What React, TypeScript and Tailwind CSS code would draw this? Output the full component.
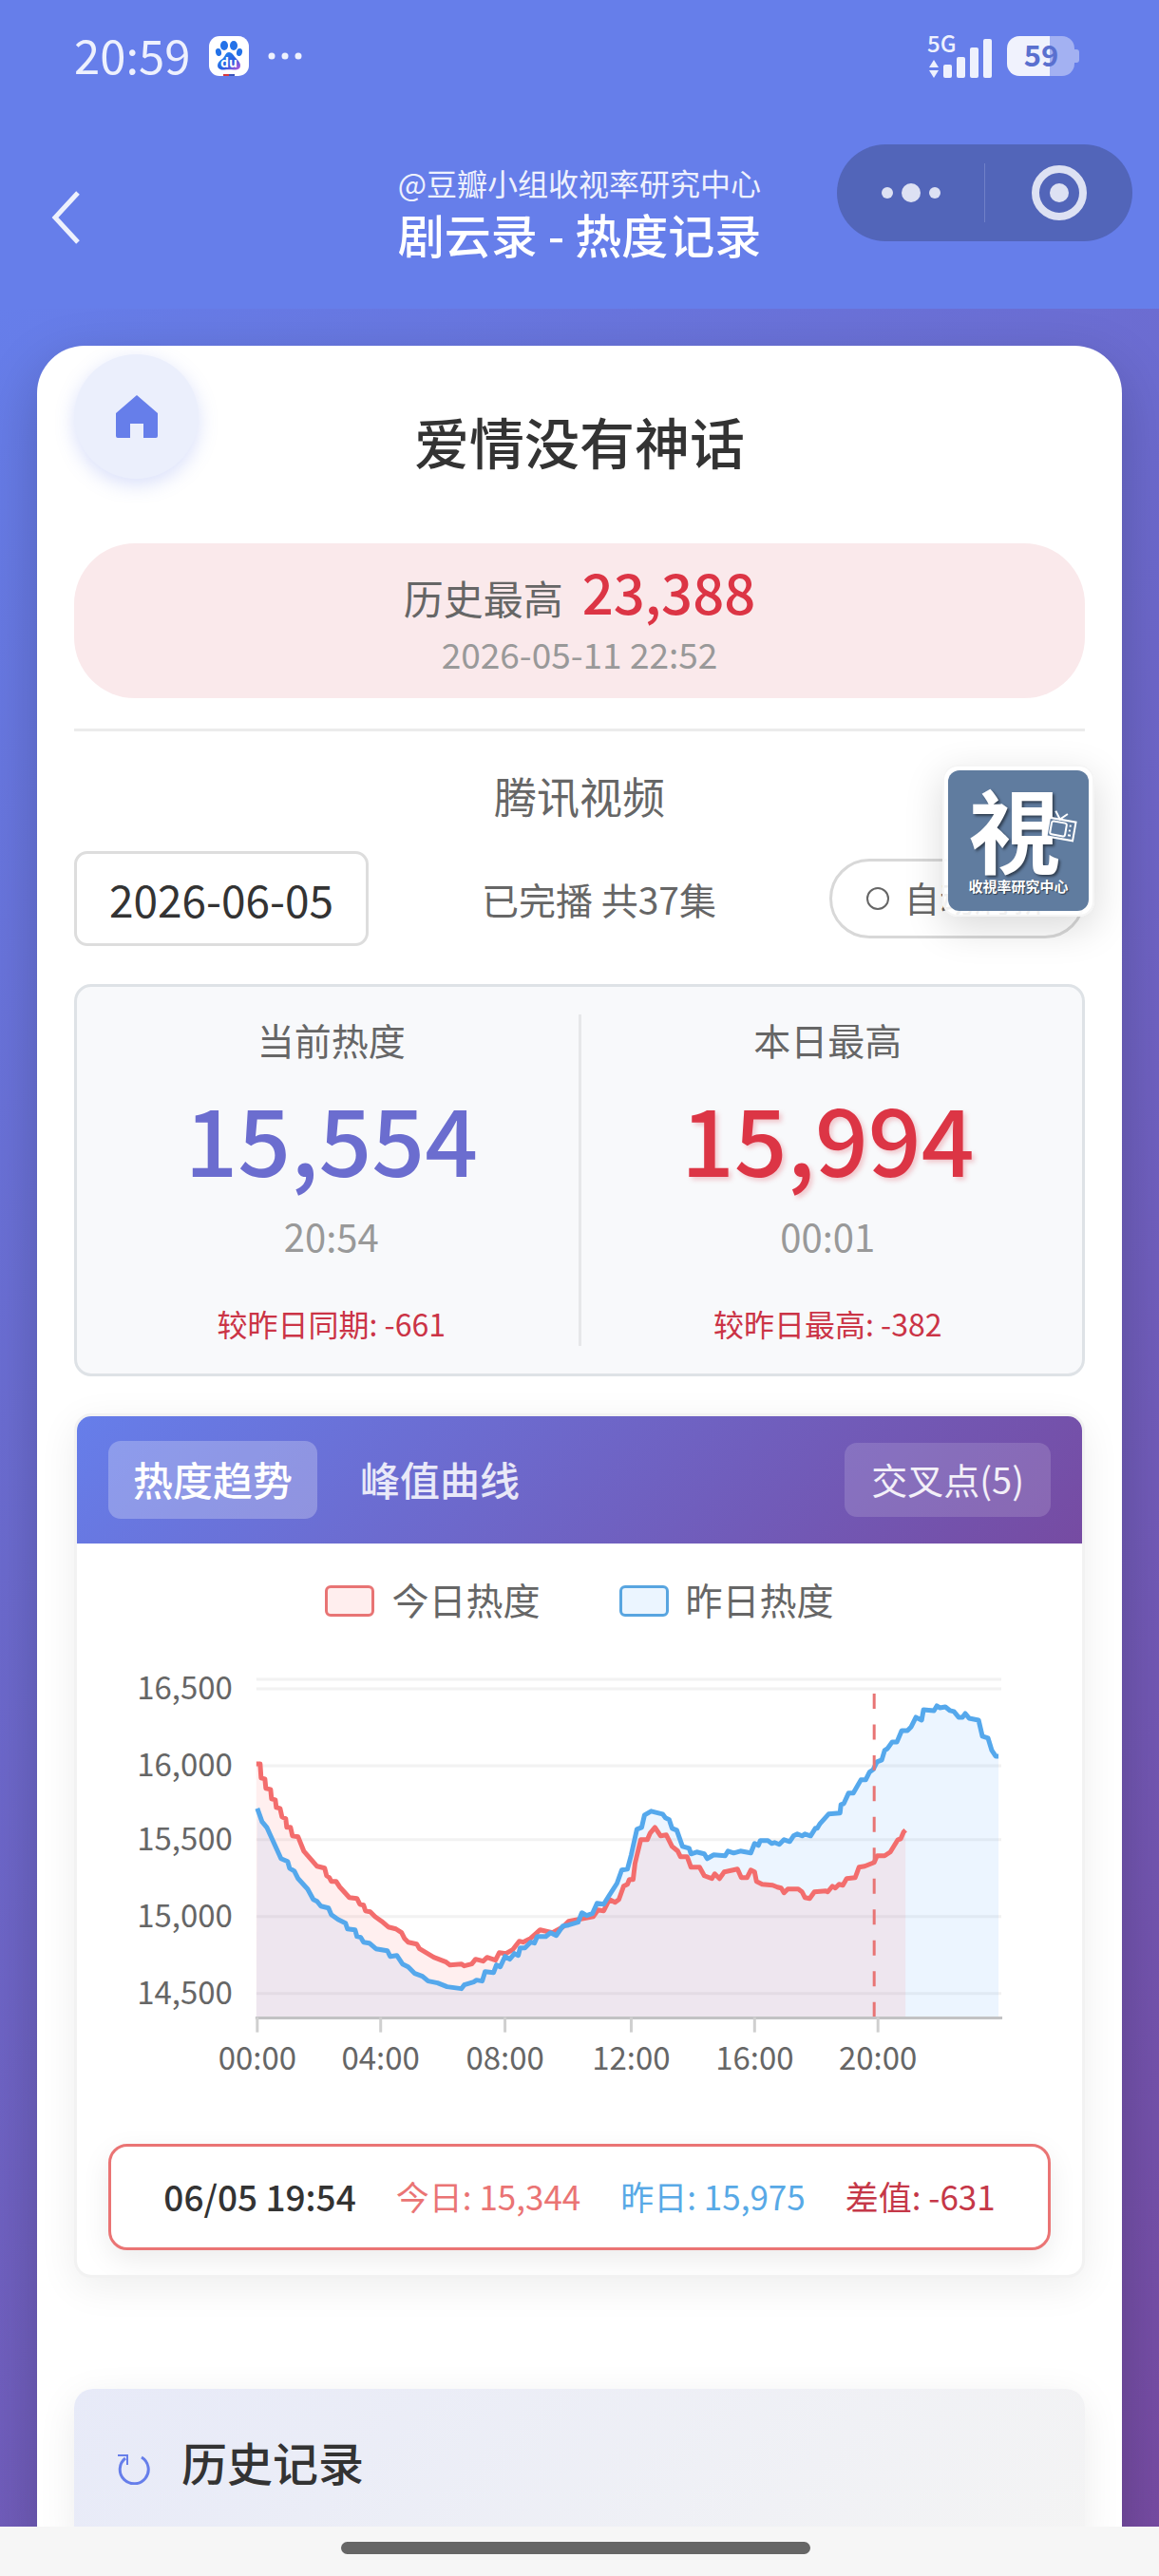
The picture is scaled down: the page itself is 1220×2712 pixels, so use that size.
import { useState } from "react";

// Plot coordinates inside the 993 x 480 chart viewBox
const TODAY_POINTS =
    "156,117 160,117 161,132 165,133 166,143 171,144 172,154 176,155 177,163 181,164 183,173 187,175 188,184 192,184 194,193 200,194 206,209 213,217 220,225 228,227 230,235 233,237 235,241 240,241 244,247 254,258 262,259 265,265 269,266 271,272 276,273 281,278 288,283 295,289 303,291 309,295 312,301 316,305 325,307 328,312 343,321 356,326 360,329 372,328 375,330 383,328 387,323 395,325 399,321 408,324 412,316 419,317 426,313 433,304 437,305 445,301 455,292 468,295 479,289 485,283 511,278 516,271 522,272 528,260 534,263 538,260 543,246 547,244 549,239 553,239 555,222 561,197 568,197 571,190 576,184 582,193 588,192 594,204 600,209 603,215 610,215 614,226 623,226 628,235 636,238 639,233 644,238 649,231 663,228 667,237 673,237 677,229 681,231 683,241 689,244 700,245 705,247 709,248 712,253 716,249 727,249 731,252 734,258 739,259 744,252 756,251 758,252 763,246 766,248 770,244 774,245 778,238 787,237 791,226 797,225 807,221 810,214 818,214 824,210 832,197 835,196 838,189 840,187";

const YESTERDAY_POINTS =
    "157,164 162,178 167,184 172,195 182,217 189,220 191,227 196,230 200,238 210,249 216,260 220,262 224,267 232,269 235,276 242,281 250,285 252,291 260,292 262,299 266,300 269,305 275,306 282,312 294,314 297,320 304,319 310,328 316,331 323,338 331,341 337,346 347,348 357,352 372,354 375,350 385,347 388,345 394,346 397,336 406,337 409,329 413,331 418,320 423,323 428,317 432,319 434,311 439,311 445,305 449,306 452,299 461,299 466,295 472,298 479,288 485,287 495,284 499,274 504,277 510,275 515,264 522,265 527,257 536,243 541,229 547,228 551,213 557,186 562,184 565,171 572,167 584,170 587,174 591,176 594,185 599,187 605,204 612,206 614,212 620,210 628,212 631,217 638,213 650,214 653,209 659,211 666,209 677,211 681,201 685,203 687,198 695,198 699,201 702,200 707,202 712,197 718,199 722,193 726,191 731,193 734,191 740,193 745,185 747,185 750,180 759,170 771,169 772,160 775,159 780,148 785,148 793,134 798,134 802,126 806,123 810,115 815,113 818,103 821,101 826,94 831,94 836,82 842,82 846,78 851,68 857,71 859,60 870,61 873,56 876,58 882,57 887,61 891,62 896,68 900,68 903,64 907,69 917,71 921,88 927,90 931,103 935,109 938,109";

const Y_AXIS = [
    { label: "16,500", y: 38 },
    { label: "16,000", y: 119 },
    { label: "15,500", y: 197 },
    { label: "15,000", y: 278 },
    { label: "14,500", y: 359 },
];

const X_AXIS = [
    { label: "00:00", x: 157 },
    { label: "04:00", x: 287 },
    { label: "08:00", x: 418 },
    { label: "12:00", x: 551 },
    { label: "16:00", x: 681 },
    { label: "20:00", x: 811 },
];

function BaiduIcon() {
    return (
        <svg viewBox="0 0 42 42" className="h-[42px] w-[42px]" aria-hidden="true">
            <defs>
                <linearGradient id="paw" x1="0" y1="0" x2="1" y2="1">
                    <stop offset="0" stopColor="#2196f3" />
                    <stop offset="0.6" stopColor="#2b5be0" />
                    <stop offset="1" stopColor="#c45bd8" />
                </linearGradient>
            </defs>
            <rect width="42" height="42" rx="11" fill="#fff" />
            <g fill="#2372e8">
                <ellipse cx="10" cy="17" rx="3" ry="4" transform="rotate(-12 10 17)" />
                <ellipse cx="16" cy="10" rx="4" ry="5" />
                <ellipse cx="26" cy="10" rx="4" ry="5" />
                <ellipse cx="32" cy="17" rx="3" ry="4" transform="rotate(12 32 17)" />
            </g>
            <path d="M21 17c4 0 5 4 8 7s4 5 4 7c0 4-4 5-7 4.500-3-.5-7-.5-10 0C12 36 9 34 9 31c0-3 2-5 5-7s3-7 7-7z" fill="url(#paw)" />
            <text x="21" y="33" textAnchor="middle" fontSize="14" fontWeight="700" fill="#fff">
                du
            </text>
            <path d="M15 40h6v2h-6z" fill="#d8383f" />
            <path d="M21 40h6v2h-6z" fill="#3b53b8" />
        </svg>
    );
}

function StatusBar() {
    return (
        <div className="flex h-[118px] items-center justify-between pr-[84px] pl-[78px] text-[#eef1fd]">
            <div className="flex items-center gap-5">
                <span className="pb-1 text-[49px] leading-[60px]">20:59</span>
                <BaiduIcon />
                <svg viewBox="0 0 36 8" className="h-2 w-9" fill="currentColor" aria-hidden="true">
                    <circle cx="4" cy="4" r="3.500" />
                    <circle cx="18" cy="4" r="3.500" />
                    <circle cx="32" cy="4" r="3.500" />
                </svg>
            </div>
            <div className="flex items-center gap-4">
                <svg viewBox="0 0 68 46" className="h-[46px] w-[68px] overflow-visible" fill="currentColor" aria-hidden="true">
                    <text x="0" y="19" fontSize="24" fontWeight="500">
                        5G
                    </text>
                    <path d="M7 27l5 8H2zM7 46l5-8H2z" />
                    <rect x="17" y="32" width="9" height="14" rx="2" />
                    <rect x="31" y="24" width="9" height="22" rx="2" />
                    <rect x="45" y="14" width="9" height="32" rx="2" />
                    <rect x="59" y="5" width="9" height="41" rx="2" />
                </svg>
                <svg viewBox="0 0 76 42" className="h-[42px] w-[76px] overflow-visible" aria-label="电量 59%">
                    <path d="M45 0h13a13 13 0 0 1 13 13v16a13 13 0 0 1-13 13H45z" fill="#a3b1f2" />
                    <path d="M71 14h2a3 3 0 0 1 3 3v8a3 3 0 0 1-3 3h-2z" fill="#a3b1f2" />
                    <path d="M13 0h32v42H13A13 13 0 0 1 0 29V13A13 13 0 0 1 13 0z" fill="#f0f2fd" />
                    <text x="36" y="32" textAnchor="middle" fontSize="31" fontWeight="700" fill="#5a70cf">
                        59
                    </text>
                </svg>
            </div>
        </div>
    );
}

function NavBar() {
    return (
        <div className="grid h-[207px] grid-cols-[1fr_auto_1fr] items-center px-7 pt-[14px] text-white">
            <button type="button" aria-label="返回" className="pl-[26px] text-[#eef1fd]">
                <svg viewBox="0 0 30 56" className="h-14 w-[30px]" fill="none" stroke="currentColor" strokeWidth="5">
                    <path d="M28 2L4 28l24 26" />
                </svg>
            </button>
            <div className="pb-[9px] text-center">
                <p className="text-[32px] leading-[44px] text-[#eef1fd]">@豆瓣小组收视率研究中心</p>
                <h1 className="text-[49px] leading-[64px] font-medium">剧云录 - 热度记录</h1>
            </div>
            <div className="mt-5 flex h-[102px] w-[311px] items-center self-start justify-self-end rounded-full bg-[#5265b9] text-[#dde1f3]">
                <button type="button" aria-label="更多" className="flex flex-1 justify-center">
                    <svg viewBox="0 0 62 20" className="h-5 w-[62px]" fill="currentColor">
                        <circle cx="6" cy="10" r="6" />
                        <circle cx="31" cy="10" r="10" />
                        <circle cx="56" cy="10" r="6" />
                    </svg>
                </button>
                <span className="h-[62px] w-px bg-[#7080c8]" />
                <button type="button" aria-label="关闭" className="flex flex-1 justify-center">
                    <svg viewBox="0 0 58 58" className="h-[58px] w-[58px]" fill="currentColor">
                        <circle cx="29" cy="29" r="25" fill="none" stroke="currentColor" strokeWidth="8" />
                        <circle cx="29" cy="29" r="10" />
                    </svg>
                </button>
            </div>
        </div>
    );
}

function LogoWidget() {
    return (
        <div className="absolute -top-[91px] -right-[10px] rounded-[16px] border-2 border-[#f5f5f5] bg-white/90 p-1 shadow-[0_12px_40px_rgba(0,0,0,0.15)]">
            <div className="relative flex h-[148px] w-[148px] flex-col items-center rounded-[12px] bg-[#607c9f] pt-[10px] text-white">
                <span className="pr-2 text-[96px] leading-[100px] font-bold [text-shadow:2px_2px_3px_rgba(0,0,0,0.5)]">視</span>
                <span className="text-[15px] leading-[24px] font-bold [text-shadow:1px_1px_1px_rgba(0,0,0,0.5)]">收視率研究中心</span>
                <svg viewBox="0 0 34 36" className="absolute top-[42px] right-3 h-9 w-[34px]" fill="none" stroke="#fff" strokeWidth="2">
                    <g transform="rotate(10 17 20)">
                        <rect x="3" y="10" width="28" height="20" fill="#607c9f" />
                        <rect x="6" y="13" width="16" height="14" rx="2" />
                        <path d="M26 14v2M26 19v2M25 25h3" />
                        <path d="M8 2l6 8 7-7" />
                    </g>
                </svg>
            </div>
        </div>
    );
}

interface StatProps {
    label: string;
    value: string;
    time: string;
    diff: string;
    tone: string;
}

function Stat({ label, value, time, diff, tone }: StatProps) {
    return (
        <div className="flex-1 pb-[2px] text-center">
            <p className="text-[39px] leading-[52px] text-[#666]">{label}</p>
            <p className={`mt-[27px] text-[98px] leading-[98px] font-medium ${tone}`}>{value}</p>
            <p className="mt-7 text-[40px] leading-[56px] text-[#999]">{time}</p>
            <p className="mt-[42px] text-[32px] leading-[44px] text-[#cb3446]">{diff}</p>
        </div>
    );
}

function TrendChart() {
    return (
        <svg viewBox="0 0 993 480" className="mt-[27px] block w-full" role="img" aria-label="热度趋势图">
            <g stroke="#f2f2f2" strokeWidth="3">
                <path d="M156 28H941" />
                {Y_AXIS.map((tick) => (
                    <path key={tick.label} d={`M156 ${tick.y}H941`} />
                ))}
            </g>

            <polygon points={`${YESTERDAY_POINTS} 938,385 156,385`} fill="#54a0ff" fillOpacity="0.11" />
            <polygon points={`${TODAY_POINTS} 840,385 156,385`} fill="#ff6b6b" fillOpacity="0.11" />
            <g fill="none" strokeWidth="5" strokeLinejoin="round">
                <polyline points={TODAY_POINTS} stroke="#f36d6d" />
                <polyline points={YESTERDAY_POINTS} stroke="#55a8ec" />
            </g>

            {/* Selected time */}
            <path d="M807 43V385" stroke="#e87474" strokeWidth="3" strokeDasharray="16 16.500" />

            <path d="M155 385H942" stroke="#c2c2c4" strokeWidth="3" />
            <g fill="#666" fontSize="33">
                {Y_AXIS.map((tick) => (
                    <text key={tick.label} x="131" y={tick.y + 11} textAnchor="end">
                        {tick.label}
                    </text>
                ))}
                {X_AXIS.map((tick) => (
                    <g key={tick.label}>
                        <path d={`M${tick.x} 384V400`} stroke="#cfcfcf" strokeWidth="3" />
                        <text x={tick.x} y="439" textAnchor="middle">
                            {tick.label}
                        </text>
                    </g>
                ))}
            </g>
        </svg>
    );
}

const TABS = ["热度趋势", "峰值曲线"];

export default function App() {
    const [tab, setTab] = useState(TABS[0]);
    const [date, setDate] = useState("2026-06-05");

    return (
        <div className="flex h-screen flex-col font-['Noto_Sans_CJK_SC',sans-serif] text-[#333]">
            <header className="shrink-0 bg-[#667eea]">
                <StatusBar />
                <NavBar />
            </header>

            <main className="min-h-0 flex-1 overflow-y-auto bg-linear-[135deg] from-[#667eea] to-[#764ba2] px-[39px] pt-[39px] [scrollbar-width:none]">
                <div className="min-h-full rounded-t-[50px] bg-white px-[39px] shadow-[0_20px_60px_rgba(0,0,0,0.2)]">
                    <div className="grid h-52 grid-cols-[1fr_auto_1fr] items-center">
                        <button
                            type="button"
                            aria-label="首页"
                            className="mt-[9px] flex h-[131px] w-[131px] items-center justify-center self-start rounded-full bg-[#ebeffc] shadow-[0_6px_20px_rgba(102,126,234,0.25)]"
                        >
                            <svg viewBox="0 0 44 45" className="h-[45px] w-11" fill="#667eea">
                                <path d="M22 0l22 19v24a2 2 0 0 1-2 2H29V30H15v15H2a2 2 0 0 1-2-2V19z" />
                            </svg>
                        </button>
                        <h2 className="pb-2 text-[58px] leading-[80px] font-medium">爱情没有神话</h2>
                    </div>

                    <div className="rounded-[64px] bg-[#fae9eb] pt-[14px] pb-[17px] text-center">
                        <p className="flex items-baseline justify-center gap-5">
                            <span className="text-[42px] leading-none text-[#666]">历史最高</span>
                            <span className="text-[58px] leading-[72px] font-medium text-[#dc3545]">23,388</span>
                        </p>
                        <p className="text-[37px] leading-[60px] text-[#999]">2026-05-11 22:52</p>
                    </div>

                    <section className="mt-8 border-t-[3px] border-[#ebebeb] pt-[38px]">
                        <h3 className="text-center text-[45px] leading-[60px] text-[#666]">腾讯视频</h3>
                        <div className="relative mt-7 flex items-center justify-between">
                            <input
                                type="text"
                                aria-label="日期"
                                value={date}
                                onChange={(e) => setDate(e.target.value)}
                                className="h-[100px] w-[310px] rounded-[14px] border-[3px] border-[#ddd] bg-white text-center text-[46px]"
                            />
                            <span className="text-[39px] text-[#666]">已完播 共37集</span>
                            <button
                                type="button"
                                className="flex h-[84px] w-[269px] items-center gap-4 rounded-full border-[3px] border-[#d8d8d8] pl-9 text-[37px] whitespace-nowrap text-[#666]"
                            >
                                <span className="h-6 w-6 rounded-full border-2 border-[#666]" />
                                自动刷新
                            </button>
                            <LogoWidget />
                        </div>
                    </section>

                    <section className="mt-10 flex rounded-[18px] border-[3px] border-[#dee2e6] bg-[#f8f9fb] px-2 py-[29px]">
                        <Stat label="当前热度" value="15,554" time="20:54" diff="较昨日同期: -661" tone="text-[#6b6dcf]" />
                        <div className="w-[3px] bg-[#e6e7e9]" />
                        <Stat
                            label="本日最高"
                            value="15,994"
                            time="00:01"
                            diff="较昨日最高: -382"
                            tone="text-[#dc3545] [text-shadow:3px_3px_5px_rgba(220,53,69,0.25)]"
                        />
                    </section>

                    <section className="mt-[39px] overflow-hidden rounded-[18px] border-[3px] border-[#f2f2f2] bg-white shadow-[0_10px_40px_rgba(0,0,0,0.07)]">
                        <div className="flex items-center justify-between bg-linear-[135deg] from-[#667eea] to-[#764ba2] px-[33px] py-[26px]">
                            <div className="flex gap-[19px]">
                                {TABS.map((name) => (
                                    <button
                                        key={name}
                                        type="button"
                                        onClick={() => setTab(name)}
                                        className={`h-[82px] rounded-[13px] px-[26px] pb-1 text-[42px] font-medium ${tab === name ? "bg-white/25 text-white" : "text-white/85"}`}
                                    >
                                        {name}
                                    </button>
                                ))}
                            </div>
                            <button type="button" className="h-[78px] rounded-[13px] bg-white/15 px-7 pb-1 text-[38px] text-white/90">
                                交叉点(5)
                            </button>
                        </div>

                        <div className="px-[33px] pt-8 pb-[26px]">
                            <div className="flex h-14 justify-center gap-[83px] text-[39px] leading-[52px] text-[#666]">
                                <div className="flex items-center gap-[18px]">
                                    <span className="h-[33px] w-[52px] rounded-[6px] border-[3px] border-[#e87474] bg-[#ffeeee]" />
                                    <span className="pb-1">今日热度</span>
                                </div>
                                <div className="flex items-center gap-[18px]">
                                    <span className="h-[33px] w-[52px] rounded-[6px] border-[3px] border-[#58a5e0] bg-[#ebf5ff]" />
                                    <span className="pb-1">昨日热度</span>
                                </div>
                            </div>

                            <TrendChart />

                            <div className="mt-[37px] flex h-28 items-center justify-center gap-[42px] rounded-[20px] border-[3px] border-[#ea7474] bg-white text-[35px] whitespace-nowrap shadow-[0_10px_30px_rgba(0,0,0,0.08)]">
                                <span className="text-[37px] font-medium">06/05 19:54</span>
                                <span className="text-[#ea7474]">今日: 15,344</span>
                                <span className="text-[#58a9e6]">昨日: 15,975</span>
                                <span className="text-[#c53848]">差值: -631</span>
                            </div>
                        </div>
                    </section>

                    <section className="mt-[117px] rounded-t-[20px] bg-linear-[135deg] from-[#e7eaf8] to-[#f4f4f4] px-[46px] pt-[46px] pb-[60px] shadow-[0_10px_40px_rgba(0,0,0,0.08)]">
                        <h3 className="flex items-center gap-[33px] text-[48px] leading-[60px] font-medium">
                            <svg viewBox="0 0 34 34" className="mt-4 h-[34px] w-[34px]" fill="none" stroke="#667eea" strokeWidth="3">
                                <path d="M25 5A15 15 0 1 1 8 6" />
                                <path d="M0 3h10v10" strokeWidth="2" />
                            </svg>
                            历史记录
                        </h3>
                    </section>
                </div>
            </main>

            <footer className="flex shrink-0 justify-center bg-[#f6f6f6] pt-4 pr-2 pb-[23px]">
                <span className="h-[13px] w-[494px] rounded-full bg-[#666]" />
            </footer>
        </div>
    );
}
